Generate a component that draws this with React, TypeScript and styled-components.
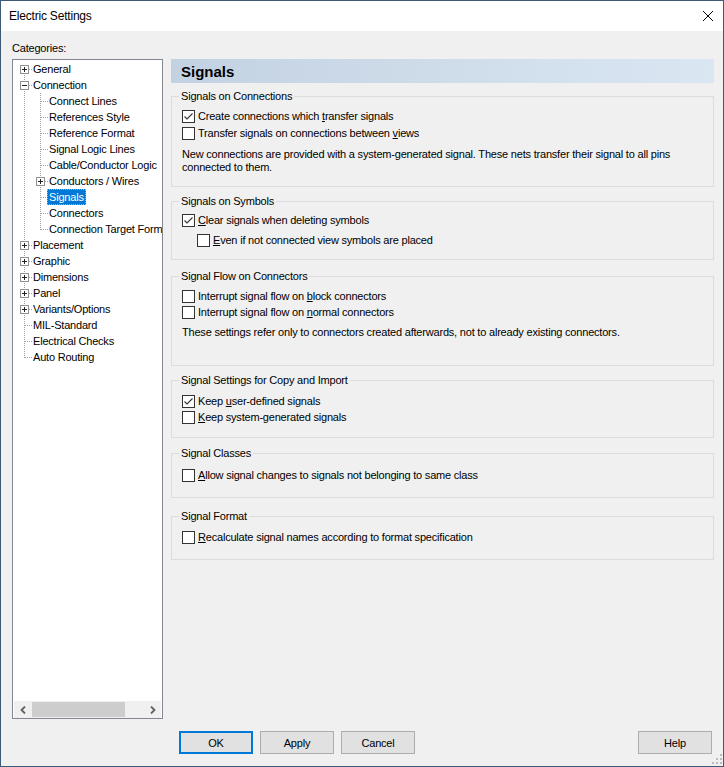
import React from "react";
import styled, { createGlobalStyle } from "styled-components";

// Electric Settings dialog – Signals page

const GlobalStyle = createGlobalStyle`
  html, body {
    margin: 0;
    padding: 0;
    background: #f0f0f0;
  }
  body {
    font-family: "Liberation Sans", Arial, sans-serif;
    font-size: 11px;
    letter-spacing: -0.2px;
    color: #000;
  }
  * {
    box-sizing: border-box;
  }
`;

type TreeNode = {
  label: string;
  children?: TreeNode[];
  collapsed?: boolean;
  selected?: boolean;
};

type FlatRow = {
  node: TreeNode;
  depth: number;
  rails: boolean[];
  first: boolean;
  last: boolean;
};

const categories: TreeNode[] = [
  { label: "General", collapsed: true },
  {
    label: "Connection",
    children: [
      { label: "Connect Lines" },
      { label: "References Style" },
      { label: "Reference Format" },
      { label: "Signal Logic Lines" },
      { label: "Cable/Conductor Logic" },
      { label: "Conductors / Wires", collapsed: true },
      { label: "Signals", selected: true },
      { label: "Connectors" },
      { label: "Connection Target Format" },
    ],
  },
  { label: "Placement", collapsed: true },
  { label: "Graphic", collapsed: true },
  { label: "Dimensions", collapsed: true },
  { label: "Panel", collapsed: true },
  { label: "Variants/Options", collapsed: true },
  { label: "MIL-Standard" },
  { label: "Electrical Checks" },
  { label: "Auto Routing" },
];

const flatten = (nodes: TreeNode[], depth = 0, rails: boolean[] = []): FlatRow[] =>
  nodes.flatMap((node, i) => {
    const last = i === nodes.length - 1;
    const row: FlatRow = { node, depth, rails, first: depth === 0 && i === 0, last };
    const kids = node.children ? flatten(node.children, depth + 1, [...rails, !last]) : [];
    return [row, ...kids];
  });

const Window = styled.div`
  width: 724px;
  height: 767px;
  border: 1px solid #3e5a76;
  background: #f0f0f0;
  display: flex;
  flex-direction: column;
`;

const TitleBar = styled.div`
  height: 30px;
  flex: none;
  background: #fff;
  display: flex;
  align-items: center;
  justify-content: space-between;
  padding: 0 10px 0 8px;
  font-size: 12px;
`;

const Content = styled.div`
  display: grid;
  grid-template-columns: 151px 543px;
  grid-template-rows: 17px 660px;
  column-gap: 8px;
  padding: 11px 0 0 11px;
`;

const Caption = styled.div`
  grid-column: 1;
  line-height: 13px;
`;

const TreeBox = styled.div`
  grid-column: 1;
  grid-row: 2;
  border: 1px solid #828790;
  background: #fff;
  display: flex;
  flex-direction: column;
`;

const TreeList = styled.div`
  flex: 1;
  overflow: hidden;
  padding-top: 1px;
`;

const TreeRow = styled.div`
  display: flex;
  align-items: center;
  height: 16px;
  padding-left: 3px;
  white-space: nowrap;

  svg {
    flex: none;
    display: block;
  }
`;

const TreeLabel = styled.span<{ $selected?: boolean }>`
  margin-left: -1px;
  padding: 0 2px;
  height: 16px;
  line-height: 16px;
  background: ${(p) => (p.$selected ? "#0078d7" : "transparent")};
  color: ${(p) => (p.$selected ? "#fff" : "#000")};
  outline: ${(p) => (p.$selected ? "1px dotted #f0a23c" : "none")};
  outline-offset: -1px;
`;

const HScroll = styled.div`
  height: 17px;
  flex: none;
  margin: 0 1px;
  background: #f0f0f0;
  display: flex;
  align-items: stretch;
`;

const ScrollArrow = styled.div`
  width: 17px;
  flex: none;
  display: flex;
  align-items: center;
  justify-content: center;
`;

const ScrollTrack = styled.div`
  flex: 1;
  padding: 1px 0;
`;

const ScrollThumb = styled.div`
  width: 93px;
  height: 100%;
  margin-left: 1px;
  background: #cdcdcd;
`;

const Panel = styled.div`
  grid-column: 2;
  grid-row: 2;
  display: flex;
  flex-direction: column;
`;

const PageHeader = styled.div`
  height: 24px;
  flex: none;
  display: flex;
  align-items: center;
  padding-left: 10px;
  font-size: 15px;
  font-weight: bold;
  letter-spacing: 0;
  background: linear-gradient(to right, #c3d2e2, #dae6f2);
`;

const Group = styled.fieldset<{ $mt: number; $pt: number; $pb: number }>`
  margin: ${(p) => p.$mt}px 0 0;
  padding: ${(p) => p.$pt}px 10px ${(p) => p.$pb}px;
  border: 1px solid #dcdcdc;
  min-width: 0;
`;

const Legend = styled.legend`
  margin-left: -3px;
  padding: 0 2px;
  line-height: 14px;
  font-size: 11px;
`;

const CheckRow = styled.label<{ $indent?: number; $gap?: number }>`
  display: flex;
  align-items: center;
  gap: 3px;
  height: 16px;
  margin-top: ${(p) => p.$gap ?? 0}px;
  padding-left: ${(p) => p.$indent ?? 0}px;
  white-space: nowrap;
`;

const Box = styled.span`
  width: 13px;
  height: 13px;
  flex: none;
  border: 1px solid #333;
  background: #fff;
  display: flex;
  align-items: center;
  justify-content: center;
`;

const Note = styled.p<{ $mt: number }>`
  margin: ${(p) => p.$mt}px 0 0;
  line-height: 13px;
  white-space: nowrap;
`;

const Footer = styled.div`
  flex: 1;
  display: flex;
  align-items: flex-start;
  gap: 7px;
  margin-top: 12px;
  padding-left: 178px;
`;

const Button = styled.button<{ $default?: boolean }>`
  width: 74px;
  height: 23px;
  padding: 0;
  font-family: "Liberation Sans", Arial, sans-serif;
  font-size: 11px;
  letter-spacing: -0.2px;
  color: #000;
  background: #e1e1e1;
  border: 1px solid ${(p) => (p.$default ? "#0078d7" : "#adadad")};
  box-shadow: ${(p) => (p.$default ? "inset 0 0 0 1px #0078d7" : "none")};
`;

const Spacer = styled.div`
  flex: 1;
`;

const Grip = styled.svg`
  align-self: flex-end;
  flex: none;
  margin-left: -7px;
  margin-bottom: 1px;
`;

const dots = { stroke: "#a0a0a0", strokeDasharray: "1 1" };

const Connector: React.FC<{ row: FlatRow }> = ({ row }) => {
  const { node, first, last } = row;
  const expander = node.collapsed ? "+" : node.children ? "-" : null;
  return (
    <svg width="16" height="16" viewBox="0 0 16 16" shapeRendering="crispEdges">
      <line x1="8.5" y1={first ? 8 : 0} x2="8.5" y2={last ? 9 : 16} {...dots} />
      <line x1="9" y1="8.5" x2="16" y2="8.5" {...dots} />
      {expander && (
        <>
          <rect x="4.5" y="4.5" width="8" height="8" fill="#fff" stroke="#919191" />
          <line x1="6" y1="8.5" x2="11" y2="8.5" stroke="#222" />
          {expander === "+" && <line x1="8.5" y1="6" x2="8.5" y2="11" stroke="#222" />}
        </>
      )}
    </svg>
  );
};

const Rail: React.FC<{ on: boolean }> = ({ on }) => (
  <svg width="16" height="16" viewBox="0 0 16 16" shapeRendering="crispEdges">
    {on && <line x1="8.5" y1="0" x2="8.5" y2="16" {...dots} />}
  </svg>
);

const Check: React.FC<{ checked?: boolean }> = ({ checked }) => (
  <Box>
    {checked && (
      <svg width="11" height="11" viewBox="0 0 11 11">
        <polyline points="1.5,5.5 4,8 9.5,2.5" fill="none" stroke="#333" strokeWidth="1.1" />
      </svg>
    )}
  </Box>
);

const Chevron: React.FC<{ dir: "left" | "right" }> = ({ dir }) => (
  <svg width="6" height="8" viewBox="0 0 6 8">
    <polyline
      points={dir === "left" ? "5,0.5 1.5,4 5,7.5" : "1,0.5 4.5,4 1,7.5"}
      fill="none"
      stroke="#606060"
      strokeWidth="1.8"
    />
  </svg>
);

const App: React.FC = () => {
  const rows = flatten(categories);

  return (
    <>
      <GlobalStyle />
      <Window>
        <TitleBar>
          <span>Electric Settings</span>
          <svg width="10" height="10" viewBox="0 0 10 10">
            <path d="M0 0 L10 10 M10 0 L0 10" stroke="#000" strokeWidth="1" />
          </svg>
        </TitleBar>

        <Content>
          <Caption>Categories:</Caption>
          <TreeBox>
            <TreeList>
              {rows.map((row) => (
                <TreeRow key={row.node.label}>
                  {row.rails.map((on, i) => (
                    <Rail key={i} on={on} />
                  ))}
                  <Connector row={row} />
                  <TreeLabel $selected={row.node.selected}>{row.node.label}</TreeLabel>
                </TreeRow>
              ))}
            </TreeList>
            <HScroll>
              <ScrollArrow>
                <Chevron dir="left" />
              </ScrollArrow>
              <ScrollTrack>
                <ScrollThumb />
              </ScrollTrack>
              <ScrollArrow>
                <Chevron dir="right" />
              </ScrollArrow>
            </HScroll>
          </TreeBox>

          <Panel>
            <PageHeader>Signals</PageHeader>

            <Group $mt={6} $pt={5} $pb={12}>
              <Legend>Signals on Connections</Legend>
              <CheckRow>
                <Check checked />
                <span>
                  Create connections which <u>t</u>ransfer signals
                </span>
              </CheckRow>
              <CheckRow $gap={1}>
                <Check />
                <span>
                  Transfer signals on connections between <u>v</u>iews
                </span>
              </CheckRow>
              <Note $mt={7}>
                New connections are provided with a system-generated signal. These nets transfer their signal to all pins
                <br />
                connected to them.
              </Note>
            </Group>

            <Group $mt={7} $pt={4} $pb={11}>
              <Legend>Signals on Symbols</Legend>
              <CheckRow>
                <Check checked />
                <span>
                  <u>C</u>lear signals when deleting symbols
                </span>
              </CheckRow>
              <CheckRow $gap={4} $indent={15}>
                <Check />
                <span>
                  <u>E</u>ven if not connected view symbols are placed
                </span>
              </CheckRow>
            </Group>

            <Group $mt={9} $pt={5} $pb={26}>
              <Legend>Signal Flow on Connectors</Legend>
              <CheckRow>
                <Check />
                <span>
                  Interrupt signal flow on <u>b</u>lock connectors
                </span>
              </CheckRow>
              <CheckRow>
                <Check />
                <span>
                  Interrupt signal flow on <u>n</u>ormal connectors
                </span>
              </CheckRow>
              <Note $mt={6}>
                These settings refer only to connectors created afterwards, not to already existing connectors.
              </Note>
            </Group>

            <Group $mt={7} $pt={6} $pb={12}>
              <Legend>Signal Settings for Copy and Import</Legend>
              <CheckRow>
                <Check checked />
                <span>
                  Keep <u>u</u>ser-defined signals
                </span>
              </CheckRow>
              <CheckRow>
                <Check />
                <span>
                  <u>K</u>eep system-generated signals
                </span>
              </CheckRow>
            </Group>

            <Group $mt={8} $pt={7} $pb={14}>
              <Legend>Signal Classes</Legend>
              <CheckRow>
                <Check />
                <span>
                  <u>A</u>llow signal changes to signals not belonging to same class
                </span>
              </CheckRow>
            </Group>

            <Group $mt={11} $pt={6} $pb={14}>
              <Legend>Signal Format</Legend>
              <CheckRow>
                <Check />
                <span>
                  <u>R</u>ecalculate signal names according to format specification
                </span>
              </CheckRow>
            </Group>
          </Panel>
        </Content>

        <Footer>
          <Button $default>OK</Button>
          <Button>Apply</Button>
          <Button>Cancel</Button>
          <Spacer />
          <Button>Help</Button>
          <Grip width="11" height="11" viewBox="0 0 11 11">
            {[
              [8, 0],
              [8, 4],
              [4, 4],
              [8, 8],
              [4, 8],
              [0, 8],
            ].map(([x, y]) => (
              <rect key={`${x}-${y}`} x={x} y={y} width="2" height="2" fill="#bcbcbc" />
            ))}
          </Grip>
        </Footer>
      </Window>
    </>
  );
};

export default App;
